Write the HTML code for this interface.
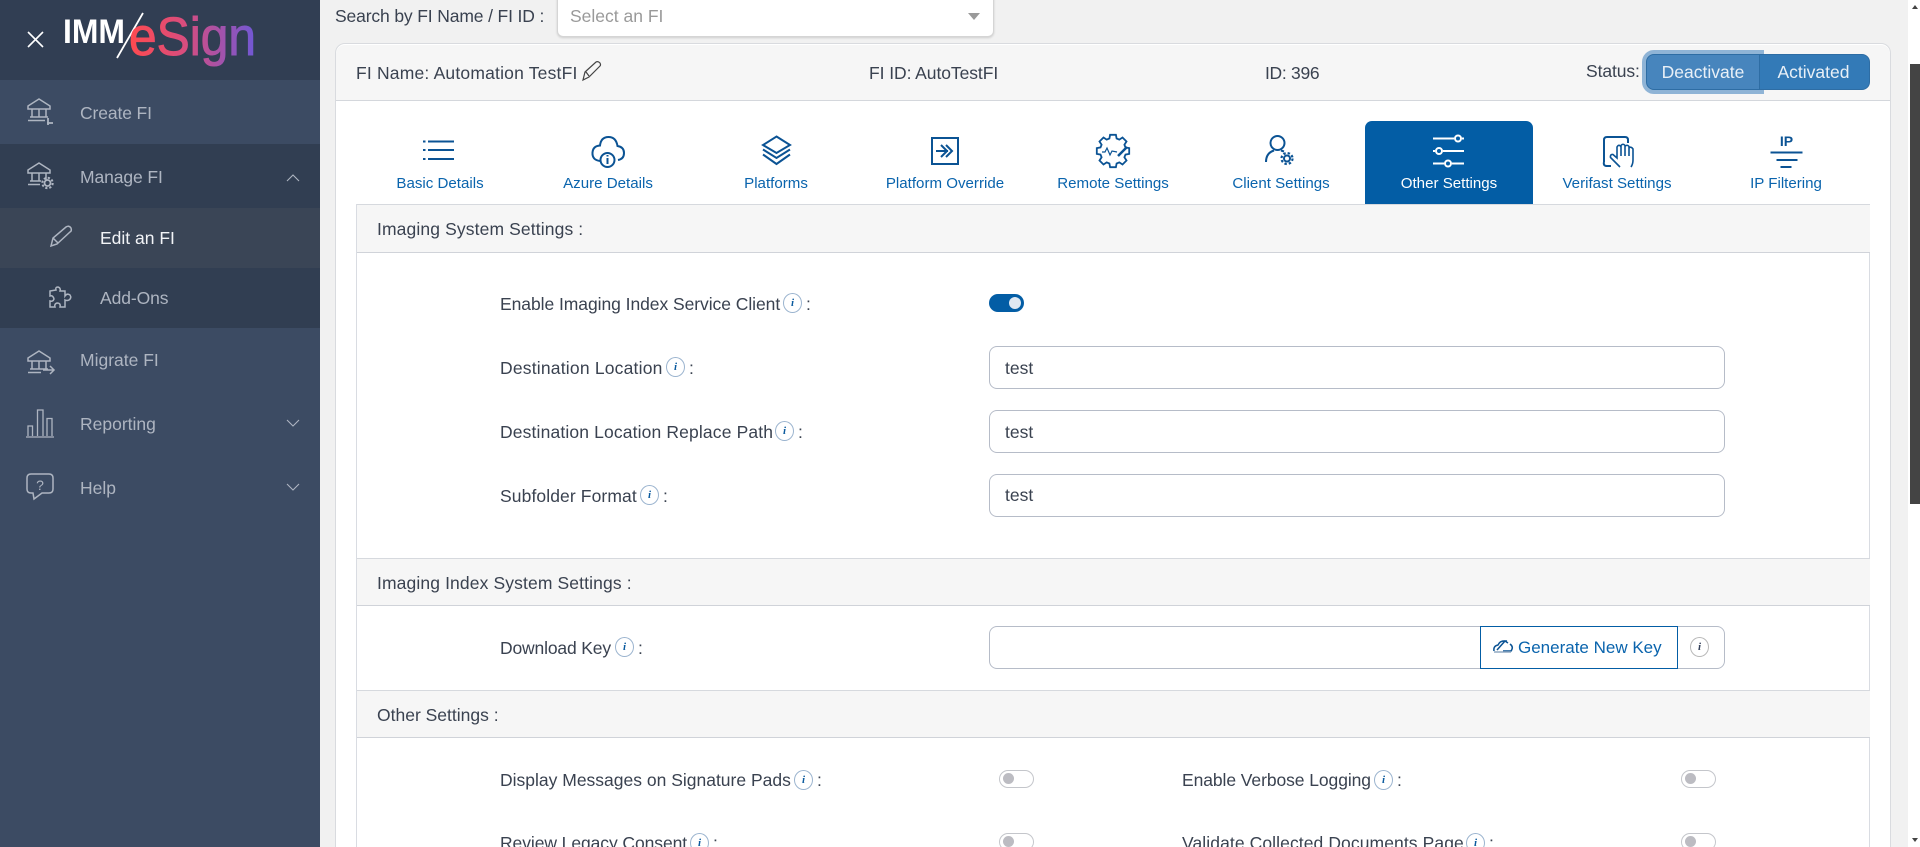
<!DOCTYPE html>
<html lang="en"><head><meta charset="utf-8"><title>IMM eSign - Edit an FI</title>
<style>
*{box-sizing:border-box}
html,body{margin:0;padding:0;width:1920px;height:847px;overflow:hidden;background:#f1f1f1;font-family:"Liberation Sans",sans-serif;color:#3a4250}
#w{position:relative;width:1920px;height:847px;overflow:hidden;background:#f1f1f1}
.a{position:absolute}
.t{position:absolute;white-space:nowrap;line-height:24px;height:24px;font-size:17.5px;transform:translateY(1px)}
.side{left:0;top:0;width:320px;height:847px;background:#3c4b63}
.side .t{color:#aeb5c1}
.hd{left:357px;width:1513px;background:#f6f6f6;border-top:1px solid #d6d9de;border-bottom:1.5px solid #d0d3d9}
.inp{left:989px;width:736px;height:43px;background:#fff;border:1.5px solid #b6bcc8;border-radius:8px}
.tab{position:absolute;top:172px;width:168px;text-align:center;font-size:15.1px;line-height:24px;color:#0a64ad;white-space:nowrap}
.i{position:absolute;width:19px;height:20px;border:1px solid #9bb4cf;border-radius:50%;text-align:center;font:italic bold 11px/18px "Liberation Serif",serif;color:#0a5a9e;background:#fff}
.off{position:absolute;width:35px;height:18px;border:1.5px solid #c4c6cb;border-radius:9px;background:#fff}
.off:after{content:"";position:absolute;left:3px;top:2px;width:11px;height:11px;border-radius:50%;background:#bcbcc2}
svg{position:absolute;left:0;top:0;overflow:visible}
</style></head><body><div id="w">

<!-- main card -->
<div class="a" style="left:335px;top:43px;width:1556px;height:820px;background:#fff;border:1.5px solid #d9dbdf;border-radius:10px"></div>
<div class="a" style="left:336px;top:45px;width:1554px;height:56px;background:#f6f6f6;border-bottom:1.5px solid #d4d7dc;border-radius:9px 9px 0 0"></div>
<div class="a" style="left:356px;top:204px;width:1514px;height:660px;border:1px solid #d9dce2;border-bottom:0"></div>

<div class="t" style="left:335px;top:3px;letter-spacing:-.14px">Search by FI Name / FI ID :</div>
<div class="a" style="left:557px;top:-6px;width:437px;height:43px;background:#fff;border:1px solid #d5d5d5;border-radius:0 0 6px 6px;box-shadow:0 1px 2px rgba(0,0,0,.15)"></div>
<div class="t" style="left:570px;top:3px;color:#9a9a9a">Select an FI</div>
<div class="a" style="left:968px;top:13px;width:0;height:0;border-left:6.5px solid transparent;border-right:6.5px solid transparent;border-top:7px solid #9a9a9a"></div>

<div class="t" style="left:356px;top:60px;letter-spacing:.19px">FI Name: Automation TestFI</div>
<div class="t" style="left:869px;top:60px;letter-spacing:-.07px">FI ID: AutoTestFI</div>
<div class="t" style="left:1265px;top:60px;letter-spacing:-.3px">ID: 396</div>
<div class="t" style="left:1586px;top:58px;letter-spacing:-.1px">Status:</div>

<div class="a" style="left:1646px;top:54px;width:114px;height:36px;background:#4785bd;border:1px solid #2e6da4;border-radius:8px 0 0 8px;box-shadow:0 0 0 4px #8fb4d6;color:#e9f0f7;font-size:17.5px;line-height:35px;text-align:center">Deactivate</div>
<div class="a" style="left:1759px;top:54px;width:111px;height:36px;background:#337ab7;border:1px solid #2e6da4;border-radius:0 8px 8px 0;color:#e9f0f7;font-size:17.5px;line-height:35px;text-align:center;padding-right:2px">Activated</div>

<!-- tabs -->
<div class="a" style="left:1365px;top:121px;width:168px;height:84px;background:#035da5;border-radius:7px 7px 0 0"></div>
<div class="tab" style="left:356px">Basic Details</div>
<div class="tab" style="left:524px">Azure Details</div>
<div class="tab" style="left:692px">Platforms</div>
<div class="tab" style="left:861px">Platform Override</div>
<div class="tab" style="left:1029px">Remote Settings</div>
<div class="tab" style="left:1197px">Client Settings</div>
<div class="tab" style="left:1365px;color:#fff">Other Settings</div>
<div class="tab" style="left:1533px">Verifast Settings</div>
<div class="tab" style="left:1702px">IP Filtering</div>

<!-- section 1 -->
<div class="a hd" style="top:204px;height:49px"></div>
<div class="t" style="left:377px;top:216px;letter-spacing:.12px">Imaging System Settings :</div>
<div class="t" style="left:500px;top:291px;letter-spacing:-.056px">Enable Imaging Index Service Client</div>
<div class="i" style="left:783px;top:293px">i</div><div class="t" style="left:806px;top:291px">:</div>
<div class="a" style="left:989px;top:294px;width:35px;height:18px;border-radius:9px;background:#035da5"></div>
<div class="a" style="left:1009px;top:297px;width:12px;height:12px;border-radius:50%;background:#dfe8f2"></div>

<div class="t" style="left:500px;top:355px;letter-spacing:.2px">Destination Location</div>
<div class="i" style="left:666px;top:357px">i</div><div class="t" style="left:689px;top:355px">:</div>
<div class="a inp" style="top:346px"></div><div class="t" style="left:1005px;top:355px">test</div>

<div class="t" style="left:500px;top:419px;letter-spacing:.14px">Destination Location Replace Path</div>
<div class="i" style="left:775px;top:421px">i</div><div class="t" style="left:798px;top:419px">:</div>
<div class="a inp" style="top:410px"></div><div class="t" style="left:1005px;top:419px">test</div>

<div class="t" style="left:500px;top:483px;letter-spacing:.1px">Subfolder Format</div>
<div class="i" style="left:640px;top:485px">i</div><div class="t" style="left:663px;top:483px">:</div>
<div class="a inp" style="top:474px"></div><div class="t" style="left:1005px;top:482px">test</div>

<!-- section 2 -->
<div class="a hd" style="top:558px;height:48px"></div>
<div class="t" style="left:377px;top:570px;letter-spacing:.12px">Imaging Index System Settings :</div>
<div class="t" style="left:500px;top:635px;letter-spacing:-.16px">Download Key</div>
<div class="i" style="left:615px;top:637px">i</div><div class="t" style="left:638px;top:635px">:</div>
<div class="a inp" style="top:626px"></div>
<div class="a" style="left:1480px;top:626px;width:198px;height:43px;background:#fff;border:1.5px solid #035da5"></div>
<div class="t" style="left:1518px;top:635px;color:#0a64ad;font-size:17px">Generate New Key</div>
<div class="i" style="left:1690px;top:637px;border-color:#b8b8b8;color:#33405a">i</div>

<!-- section 3 -->
<div class="a hd" style="top:690px;height:48px"></div>
<div class="t" style="left:377px;top:702px">Other Settings :</div>
<div class="t" style="left:500px;top:767px">Display Messages on Signature Pads</div>
<div class="i" style="left:794px;top:770px">i</div><div class="t" style="left:817px;top:767px">:</div>
<div class="off" style="left:999px;top:770px"></div>
<div class="t" style="left:1182px;top:767px;letter-spacing:-.08px">Enable Verbose Logging</div>
<div class="i" style="left:1374px;top:770px">i</div><div class="t" style="left:1397px;top:767px">:</div>
<div class="off" style="left:1681px;top:770px"></div>
<div class="t" style="left:500px;top:830px;letter-spacing:-.08px">Review Legacy Consent</div>
<div class="i" style="left:690px;top:833px">i</div><div class="t" style="left:713px;top:830px">:</div>
<div class="off" style="left:999px;top:833px"></div>
<div class="t" style="left:1182px;top:830px;letter-spacing:.09px">Validate Collected Documents Page</div>
<div class="i" style="left:1466px;top:833px">i</div><div class="t" style="left:1489px;top:830px">:</div>
<div class="off" style="left:1681px;top:833px"></div>

<!-- scrollbar -->
<div class="a" style="left:1908px;top:0;width:12px;height:847px;background:#fff"></div>
<div class="a" style="left:1910px;top:64px;width:10px;height:440px;background:#444"></div>
<div class="a" style="left:1912px;top:5px;border-left:3.5px solid transparent;border-right:3.5px solid transparent;border-bottom:4px solid #444"></div>
<div class="a" style="left:1912px;top:838px;border-left:3.5px solid transparent;border-right:3.5px solid transparent;border-top:4px solid #444"></div>

<!-- sidebar -->
<div class="a side"></div>
<div class="a" style="left:0;top:0;width:320px;height:80px;background:#313e53"></div>
<div class="a" style="left:0;top:80px;width:320px;height:64px;background:#3c4b63"></div>
<div class="a" style="left:0;top:144px;width:320px;height:184px;background:#313e52"></div>
<div class="a" style="left:0;top:208px;width:320px;height:60px;background:#3a4556"></div>
<div class="a side" style="background:none">
<div class="t" style="left:80px;top:100px;letter-spacing:-.12px">Create FI</div>
<div class="t" style="left:80px;top:164px;letter-spacing:-.1px">Manage FI</div>
<div class="t" style="left:100px;top:225px;color:#f2f4f7">Edit an FI</div>
<div class="t" style="left:100px;top:285px;letter-spacing:-.1px">Add-Ons</div>
<div class="t" style="left:80px;top:347px">Migrate FI</div>
<div class="t" style="left:80px;top:411px">Reporting</div>
<div class="t" style="left:80px;top:475px">Help</div>
</div>

<svg width="1920" height="847" viewBox="0 0 1920 847" fill="none">
<defs><linearGradient id="g" gradientUnits="userSpaceOnUse" x1="130" y1="0" x2="256" y2="0"><stop offset="0" stop-color="#ff4a4f"/><stop offset=".45" stop-color="#d64d80"/><stop offset="1" stop-color="#6f58d6"/></linearGradient></defs>
<!-- logo -->
<path d="M28 32 43 47M43 32 28 47" stroke="#fff" stroke-width="1.6"/>
<text x="63" y="43" font-family="Liberation Sans" font-weight="700" font-size="34" fill="#fff" textLength="62" lengthAdjust="spacingAndGlyphs">IMM</text>
<path d="M143 13 117 58" stroke="#fff" stroke-width="1.8"/>
<text x="129" y="55" font-family="Liberation Sans" font-size="54" fill="url(#g)" stroke="url(#g)" stroke-width="1" textLength="127" lengthAdjust="spacingAndGlyphs">eSign</text>

<!-- sidebar icons -->
<g stroke="#aeb5c1" stroke-width="1.5">
<path d="M28 106 39 99 50 106V109H28Z"/><path d="M32 109V117M39 109V117M46 109V117M30 117H48M28 120.500H45"/>
<path d="M47 123H53M48 118V125" stroke-width="1.800"/>
<g transform="translate(0,64)"><path d="M28 106 39 99 50 106V109H28Z"/><path d="M32 109V117M39 109V117M46 109V117M30 117H41M28 120.500H40"/></g>
<circle cx="47.500" cy="183" r="3" stroke-width="1.800"/><circle cx="47.500" cy="183" r="5.200" stroke-dasharray="2.200 1.900" stroke-width="2"/>
<path d="M51 246 53 238 66 227Q69 225 71 228 72 231 70 232L57 244ZM53 238 58 243"/>
<path d="M56 290Q55 287 58 287 61 288 60 291H65V296Q67 293 70 295 72 298 69 300 67 301 65 300V307H60Q61 303 57 303 54 304 55 307H50V301Q53 302 54 299 53 295 50 296V291Z"/>
<g transform="translate(0,252)"><path d="M28 106 39 99 50 106V109H28Z"/><path d="M32 109V117M39 109V117M46 109V117M30 117H48M28 120.500H41"/></g>
<path d="M43 370H54M50 366 54 370 50 374"/>
<path d="M26 437H54M28 436V426H32.500V436M37.500 436V410H43V436M47 436V418.500H52V436" stroke-width="1.300"/>
<path d="M31 474H49Q53 474 53 478V489Q53 493 49 493H42L34 499 33 493H31Q27 493 27 489V478Q27 474 31 474Z"/>
</g>
<text x="40" y="490" font-family="Liberation Sans" font-size="14" fill="#aeb5c1" text-anchor="middle">?</text>
<g stroke="#aeb5c1" stroke-width="1.100">
<path d="M287 181 293 175 299 181M287 420 293 426 299 420M287 484 293 490 299 484"/>
</g>

<!-- pencil in card -->
<path d="M583 80 585 72 596 62Q598 61 600 63 601 65 600 66L589 77Z M586 72 589 76" stroke="#444" stroke-width="1.200"/>

<!-- tab icons -->
<g stroke="#0b5394" stroke-width="2">
<path d="M423 141.500H425.500M428 141.500H454M423 150H425.500M428 150H454M423 159H425.500M428 159H454"/>
<path d="M600 161Q592 160 592.500 152.500 593 146 600 145.500 601 137 608.500 137 616 137 617.500 146 624 147 624 153 624 159 618 160"/>
<circle cx="607.500" cy="160" r="7"/>
<path d="M607.500 158V164M607.500 155V156.500" stroke-width="2"/>
<path d="M776.500 136.500 790 145 776.500 153 763 145Z M763 149.500 776.500 158 790 149.500M763 154.500 776.500 164 790 154.500"/>
<rect x="932" y="138" width="26" height="26"/>
<path d="M936 151H948M946 145 952 151 946 157M941 145 947 151 941 157"/>
<g transform="translate(1113,151)" stroke-width="1.800"><polygon points="-3.600,-12.500 -2.900,-16.200 2.900,-16.200 3.600,-12.500 6.300,-11.400 9.500,-13.500 13.500,-9.500 11.400,-6.300 12.500,-3.600 16.200,-2.900 16.200,2.900 12.500,3.600 11.400,6.300 13.500,9.500 9.500,13.500 6.300,11.400 3.600,12.500 2.900,16.200 -2.900,16.200 -3.600,12.500 -6.300,11.400 -9.500,13.500 -13.500,9.500 -11.400,6.300 -12.500,3.600 -16.200,2.900 -16.200,-2.900 -12.500,-3.600 -11.400,-6.300 -13.500,-9.500 -9.500,-13.500 -6.300,-11.400"/></g>
<path d="M1102 152H1105L1107 148 1110 155 1112 151 1117 152" stroke-width="1.200"/>
<path d="M1118 156 1127 147" stroke-width="2.500"/>
<circle cx="1277.500" cy="143" r="7"/>
<path d="M1266 162Q1266 153 1274 150.500M1281 150.500 1284 151.500"/>
<circle cx="1287" cy="158.500" r="3"/><circle cx="1287" cy="158.500" r="5.500" stroke-dasharray="2.400 2" stroke-width="2.200"/>
<path d="M1604 162Q1603 166 1607 166H1611M1604 162V140Q1604 137 1607 137H1625Q1628 137 1628 140V143"/>
<path d="M1620 167 1610.500 157.500Q1610 154 1613 154.500L1617 158V147Q1619 143.500 1621 147V145.500Q1623 143 1625 145.500V146.500Q1627 144 1629 146.500V148Q1631 146 1633 149V160Q1633 164 1631 167M1621 147V156M1625 146V156M1629 147V156" stroke-width="1.600"/>
<path d="M1770.500 152.500H1802.500M1776.500 160H1797.500M1780.500 167H1791.500" stroke-width="2"/>
</g>
<text x="1786.500" y="146" font-family="Liberation Sans" font-weight="700" font-size="14" fill="#0b5394" text-anchor="middle">IP</text>
<g stroke="#fff" stroke-width="2">
<path d="M1433 138.500H1454M1462 138.500H1464M1433 151H1435M1443 151H1464M1433 163.500H1444M1452 163.500H1464"/>
<circle cx="1458" cy="138.500" r="3"/><circle cx="1439" cy="151" r="3"/><circle cx="1448" cy="163.500" r="3"/>
</g>
<!-- generate key icon -->
<path d="M1494 651Q1493 646 1498 645 1500 640 1507 641M1503 651H1511Q1514 647 1510 644M1497 650 1505 641 1508 643" stroke="#0b5394" stroke-width="1.500"/>
<path d="M1494 652H1511" stroke="#8fa8c2" stroke-width="1.500"/>
</svg>
</div></body></html>
